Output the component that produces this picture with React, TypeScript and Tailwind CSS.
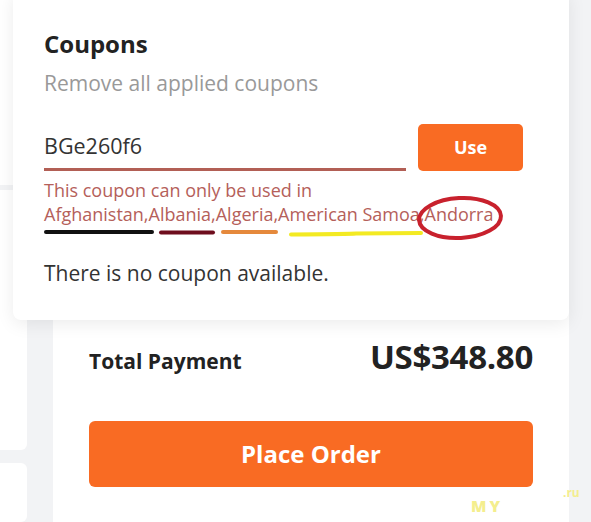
import React from "react";

export default function App() {
  return (
    <div
      className="relative w-[591px] h-[522px] overflow-hidden bg-[#f2f3f5] flex"
      style={{ fontFamily: '"Open Sans", "Liberation Sans", sans-serif' }}
    >
      {/* left column of cards */}
      <div className="w-[27px] flex flex-col gap-[5px] shrink-0">
        <div className="h-[188px] bg-white rounded-r-md" />
        <div className="h-[264px] bg-white rounded-r-md" />
        <div className="mt-[8px] h-[60px] bg-white rounded-r-md" />
      </div>

      {/* summary card */}
      <div className="ml-[26px] w-[516px] h-[560px] -mt-[20px] bg-white rounded-lg flex flex-col px-[36px]">
        <div className="mt-[360px] flex items-baseline justify-between">
          <span className="text-[21px] font-bold text-[#222]">Total Payment</span>
          <span className="text-[33px] font-bold text-[#222] leading-none tracking-[-0.3px]">US$348.80</span>
        </div>
        <button className="mt-[43px] h-[66px] w-full rounded-md bg-[#f96b23] text-white text-[24px] font-bold">
          Place Order
        </button>
      </div>

      {/* coupons popover */}
      <div className="absolute left-[13px] top-[-10px] w-[556px] h-[330px] bg-white rounded-lg shadow-[0_4px_18px_rgba(0,0,0,0.08)] pl-[31px] pr-[46px] pt-[39px]">
        <div className="text-[24px] font-bold leading-[30px] text-[#222]">Coupons</div>
        <div className="mt-[10px] text-[21px] leading-[28px] text-[#999]">Remove all applied coupons</div>
        <div className="mt-[27px] flex items-start gap-[12px]">
          <div className="w-[362px] h-[47px] flex items-center border-b-[3px] border-[#b25f55] text-[21.5px] text-[#333]">
            BGe260f6
          </div>
          <button className="w-[105px] h-[47px] rounded-[5px] bg-[#f96b23] text-white text-[18px] font-bold">
            Use
          </button>
        </div>
        <div className="mt-[7px] text-[18px] leading-[24px] text-[#b5605a]">
          <div>This coupon can only be used in</div>
          <div>Afghanistan,Albania,Algeria,American Samoa,Andorra</div>
        </div>
        <div className="mt-[33px] text-[21px] leading-[28px] text-[#333]">There is no coupon available.</div>
      </div>

      {/* hand-drawn annotations */}
      <svg className="absolute left-0 top-0 pointer-events-none" width="591" height="522">
        <line x1="46" y1="232" x2="152" y2="232" stroke="#111" strokeWidth="4" strokeLinecap="round" />
        <line x1="161" y1="232.5" x2="213" y2="232.5" stroke="#6e0d1d" strokeWidth="4" strokeLinecap="round" />
        <line x1="223" y1="232" x2="276" y2="232" stroke="#e5893c" strokeWidth="4" strokeLinecap="round" />
        <path d="M291 234.5 Q350 234 356 233.5 Q390 233 421 233" stroke="#f3ea22" strokeWidth="4" fill="none" strokeLinecap="round" />
        <ellipse cx="460" cy="218" rx="41" ry="20" stroke="#c8212d" strokeWidth="4" fill="none" transform="rotate(-3 460 218)" />
      </svg>

      {/* watermark */}
      <div className="absolute left-[471px] top-[494px] text-[16px] font-extrabold text-[#f4ee8e] tracking-[3px]">MY</div>
      <div className="absolute left-[563px] top-[484px] text-[12px] font-bold text-[#f4ee8e]">.ru</div>
    </div>
  );
}
